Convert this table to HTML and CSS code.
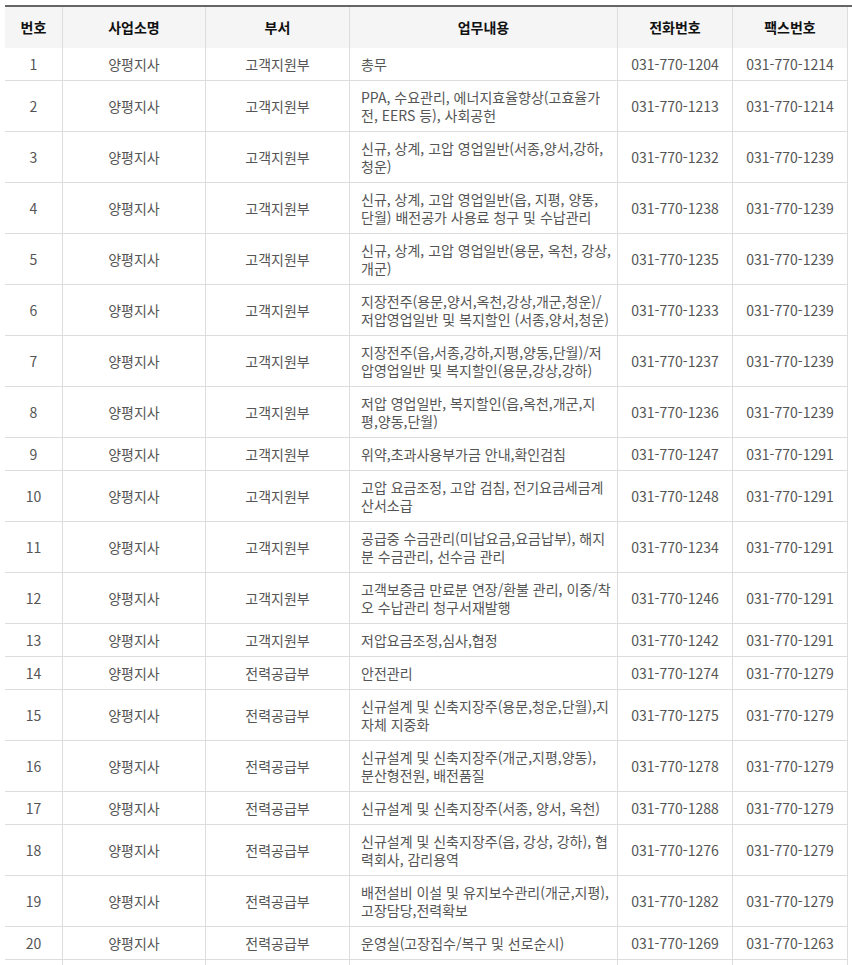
FILE: index.html
```html
<!DOCTYPE html>
<html lang="ko">
<head>
<meta charset="utf-8">
<title>양평지사 업무 안내</title>
<link rel="stylesheet" href="styles.css">
</head>
<body>
<div class="wrap">
<table class="staff">
<colgroup>
<col class="c-no"><col class="c-office"><col class="c-dept"><col class="c-task"><col class="c-tel"><col class="c-fax">
</colgroup>
<thead>
<tr><th>번호</th><th>사업소명</th><th>부서</th><th>업무내용</th><th>전화번호</th><th>팩스번호</th></tr>
</thead>
<tbody>
<tr><td>1</td><td>양평지사</td><td>고객지원부</td><td class="task">총무</td><td>031-770-1204</td><td>031-770-1214</td></tr>
<tr><td>2</td><td>양평지사</td><td>고객지원부</td><td class="task">PPA, 수요관리, 에너지효율향상(고효율가<br>전, EERS 등), 사회공헌</td><td>031-770-1213</td><td>031-770-1214</td></tr>
<tr><td>3</td><td>양평지사</td><td>고객지원부</td><td class="task">신규, 상계, 고압 영업일반(서종,양서,강하,<br>청운)</td><td>031-770-1232</td><td>031-770-1239</td></tr>
<tr><td>4</td><td>양평지사</td><td>고객지원부</td><td class="task">신규, 상계, 고압 영업일반(읍, 지평, 양동,<br>단월) 배전공가 사용료 청구 및 수납관리</td><td>031-770-1238</td><td>031-770-1239</td></tr>
<tr><td>5</td><td>양평지사</td><td>고객지원부</td><td class="task">신규, 상계, 고압 영업일반(용문, 옥천, 강상,<br>개군)</td><td>031-770-1235</td><td>031-770-1239</td></tr>
<tr><td>6</td><td>양평지사</td><td>고객지원부</td><td class="task">지장전주(용문,양서,옥천,강상,개군,청운)/<br>저압영업일반 및 복지할인 (서종,양서,청운)</td><td>031-770-1233</td><td>031-770-1239</td></tr>
<tr><td>7</td><td>양평지사</td><td>고객지원부</td><td class="task">지장전주(읍,서종,강하,지평,양동,단월)/저<br>압영업일반 및 복지할인(용문,강상,강하)</td><td>031-770-1237</td><td>031-770-1239</td></tr>
<tr><td>8</td><td>양평지사</td><td>고객지원부</td><td class="task">저압 영업일반, 복지할인(읍,옥천,개군,지<br>평,양동,단월)</td><td>031-770-1236</td><td>031-770-1239</td></tr>
<tr><td>9</td><td>양평지사</td><td>고객지원부</td><td class="task">위약,초과사용부가금 안내,확인검침</td><td>031-770-1247</td><td>031-770-1291</td></tr>
<tr><td>10</td><td>양평지사</td><td>고객지원부</td><td class="task">고압 요금조정, 고압 검침, 전기요금세금계<br>산서소급</td><td>031-770-1248</td><td>031-770-1291</td></tr>
<tr><td>11</td><td>양평지사</td><td>고객지원부</td><td class="task">공급중 수금관리(미납요금,요금납부), 해지<br>분 수금관리, 선수금 관리</td><td>031-770-1234</td><td>031-770-1291</td></tr>
<tr><td>12</td><td>양평지사</td><td>고객지원부</td><td class="task">고객보증금 만료분 연장/환불 관리, 이중/착<br>오 수납관리 청구서재발행</td><td>031-770-1246</td><td>031-770-1291</td></tr>
<tr><td>13</td><td>양평지사</td><td>고객지원부</td><td class="task">저압요금조정,심사,협정</td><td>031-770-1242</td><td>031-770-1291</td></tr>
<tr><td>14</td><td>양평지사</td><td>전력공급부</td><td class="task">안전관리</td><td>031-770-1274</td><td>031-770-1279</td></tr>
<tr><td>15</td><td>양평지사</td><td>전력공급부</td><td class="task">신규설계 및 신축지장주(용문,청운,단월),지<br>자체 지중화</td><td>031-770-1275</td><td>031-770-1279</td></tr>
<tr><td>16</td><td>양평지사</td><td>전력공급부</td><td class="task">신규설계 및 신축지장주(개군,지평,양동),<br>분산형전원, 배전품질</td><td>031-770-1278</td><td>031-770-1279</td></tr>
<tr><td>17</td><td>양평지사</td><td>전력공급부</td><td class="task">신규설계 및 신축지장주(서종, 양서, 옥천)</td><td>031-770-1288</td><td>031-770-1279</td></tr>
<tr><td>18</td><td>양평지사</td><td>전력공급부</td><td class="task">신규설계 및 신축지장주(읍, 강상, 강하), 협<br>력회사, 감리용역</td><td>031-770-1276</td><td>031-770-1279</td></tr>
<tr><td>19</td><td>양평지사</td><td>전력공급부</td><td class="task">배전설비 이설 및 유지보수관리(개군,지평),<br>고장담당,전력확보</td><td>031-770-1282</td><td>031-770-1279</td></tr>
<tr><td>20</td><td>양평지사</td><td>전력공급부</td><td class="task">운영실(고장집수/복구 및 선로순시)</td><td>031-770-1269</td><td>031-770-1263</td></tr>
<tr class="tail"><td></td><td></td><td></td><td class="task"></td><td></td><td></td></tr>
</tbody>
</table>
</div>
</body>
</html>
```
FILE: styles.css
```css
html, body {
  margin: 0;
  padding: 0;
  background: #fff;
  overflow: hidden;
}
body {
  font-family: "Noto Sans CJK KR", "Noto Sans", sans-serif;
  font-size: 14px;
  color: #555;
}
.wrap {
  margin: 5px 0 0 5px;
  border-top: 2px solid #666;
}
.staff {
  border-collapse: separate;
  border-spacing: 0;
  table-layout: fixed;
  width: 843px;
}
.c-no { width: 58px; }
.c-office { width: 143px; }
.c-dept { width: 144px; }
.c-task { width: 268px; }
.c-tel { width: 115px; }
.c-fax { width: 115px; }
.staff th,
.staff td {
  box-sizing: border-box;
  border-right: 1px solid #ddd;
  line-height: 18px;
  text-align: center;
  vertical-align: middle;
}
.staff th {
  background: #f5f5f5;
  color: #111;
  font-weight: 700;
  padding: 11px 4px 12px;
}
.staff td {
  border-bottom: 1px solid #ddd;
  padding: 7px 4px;
}
.staff td.task {
  text-align: left;
  white-space: nowrap;
  padding: 7px 2px 7px 11px;
}
.staff .tail td {
  height: 33px;
}
```
